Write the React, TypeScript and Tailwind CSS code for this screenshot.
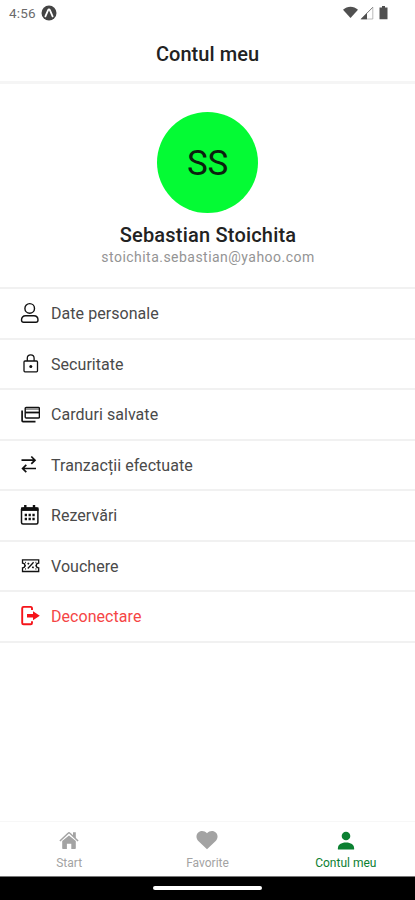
import React from 'react';

type IconProps = { className?: string };

const UserIcon: React.FC<IconProps> = ({ className }) => (
  <svg className={className} viewBox="0 0 20 22" fill="none" stroke="currentColor" strokeWidth="1.4">
    <circle cx="9.700" cy="6.400" r="4.800" />
    <path d="M5.600 13.700h8.200c2.800 0 4.200 1.900 4.200 4.300 0 1.500-.8 2.300-2.100 2.300H3.600c-1.300 0-2.100-.8-2.100-2.300 0-2.400 1.400-4.300 4.100-4.300z" />
  </svg>
);

const LockIcon: React.FC<IconProps> = ({ className }) => (
  <svg className={className} viewBox="0 0 20 22" fill="none" stroke="currentColor" strokeWidth="1.3">
    <rect x="4" y="8" width="13.500" height="10.800" rx="1" />
    <path d="M7.300 8V5.200a3.400 3.400 0 0 1 6.800 0V8" />
    <circle cx="10.800" cy="13.500" r="1.500" fill="currentColor" stroke="none" />
  </svg>
);

const CardsIcon: React.FC<IconProps> = ({ className }) => (
  <svg className={className} viewBox="0 0 20 22" fill="none" stroke="currentColor" strokeWidth="1.4">
    <rect x="5.200" y="4.500" width="14.200" height="10.500" rx="1" />
    <path d="M5.200 6.200h14.200" strokeOpacity=".5" />
    <path d="M5.200 9.500h14.200" strokeWidth="1.800" />
    <path d="M2.100 7.500v10.200c0 .6.300.9.900.9h12.500" strokeWidth="1.700" />
  </svg>
);

const TransferIcon: React.FC<IconProps> = ({ className }) => (
  <svg className={className} viewBox="0 0 20 22" fill="none" stroke="currentColor" strokeWidth="1.700">
    <path d="M1.500 6.200h13.300M11.300 2.500L15 6.200l-3.700 3.700M16 14.500H2.800M6.300 10.800l-3.700 3.700 3.700 3.700" />
  </svg>
);

const CalendarIcon: React.FC<IconProps> = ({ className }) => (
  <svg className={className} viewBox="0 0 20 22" fill="none" stroke="currentColor">
    <rect x="1.500" y="4" width="16.400" height="16" rx="1.500" strokeWidth="1.500" />
    <path d="M1 5.200h17.500" strokeWidth="3.500" />
    <path d="M5.300 1v5M14 1v5" strokeWidth="2.400" />
    <path d="M4.700 11h10M4.700 15h10" strokeWidth="2.300" strokeDasharray="2.300 1.550" />
  </svg>
);

const VoucherIcon: React.FC<IconProps> = ({ className }) => (
  <svg className={className} viewBox="0 0 20 22" fill="none" stroke="currentColor" strokeWidth="1.300">
    <path d="M2.500 4.800h16.200v3.300a2.400 2.400 0 0 0 0 4.800v3.600H2.500v-3.600a2.400 2.400 0 0 0 0-4.800z" />
    <path d="M7.800 13.500l5.800-6.200" />
    <path d="M7.600 8.200l1.500.8M12.200 12l1.500.8" strokeWidth="1.800" />
    <path d="M5.500 6.800v1.500M5.500 10v1.500M5.500 13.200v1.500M15.900 6.800v1.500M15.900 10v1.500M15.900 13.200v1.500" strokeWidth=".8" />
  </svg>
);

const LogoutIcon: React.FC<IconProps> = ({ className }) => (
  <svg className={className} viewBox="0 0 20 22" fill="none" stroke="currentColor">
    <path d="M12 5V3.300c0-.9-.4-1.400-1.300-1.400H3.600c-.9 0-1.400.5-1.400 1.400v14.600c0 .9.500 1.400 1.400 1.400h7.100c.9 0 1.300-.5 1.300-1.400v-1.700" strokeWidth="1.900" />
    <path d="M7 9h6V6.200l6.800 4.500-6.800 4.500v-2.800H7z" fill="currentColor" stroke="none" />
  </svg>
);

const HomeIcon: React.FC<IconProps> = ({ className }) => (
  <svg className={className} viewBox="0 0 20 20" fill="currentColor">
    <path d="M10 5.600l6.800 5.500v7c0 .7-.4 1-1 1h-3.500v-5.300H7.900v5.300H4.200c-.6 0-1-.3-1-1v-7z" />
    <path d="M.9 11L9.100 3.200c.5-.5 1.300-.5 1.800 0l8.200 7.800" fill="none" stroke="currentColor" strokeWidth="1.500" />
    <path d="M14 2.300h2.800v6.500L14 6.200z" />
  </svg>
);

const HeartIcon: React.FC<IconProps> = ({ className }) => (
  <svg className={className} viewBox="0 0 22 20" fill="currentColor">
    <path d="M11 19.200L2.300 11C-.1 8.600-.1 4.900 2 2.700 4.500.2 8.500.5 11 3.300 13.500.5 17.500.2 20 2.700c2.100 2.200 2.100 5.900-.3 8.300z" />
  </svg>
);

const PersonIcon: React.FC<IconProps> = ({ className }) => (
  <svg className={className} viewBox="0 0 18 20" fill="currentColor">
    <circle cx="9" cy="6" r="4.300" />
    <path d="M.9 19.500v-1.300C.9 14.800 4 12.500 9 12.500s8.100 2.300 8.100 5.700v1.300z" />
  </svg>
);

const menu = [
  { label: 'Date personale', icon: UserIcon },
  { label: 'Securitate', icon: LockIcon },
  { label: 'Carduri salvate', icon: CardsIcon },
  { label: 'Tranzacții efectuate', icon: TransferIcon },
  { label: 'Rezervări', icon: CalendarIcon },
  { label: 'Vouchere', icon: VoucherIcon },
  { label: 'Deconectare', icon: LogoutIcon, danger: true },
];

const StatusBar: React.FC = () => (
  <div className="flex h-[26px] items-center pl-[9px] pr-[27px] text-[#555]">
    <span className="text-[13.5px] tracking-[0.2px] text-[#6b6b6b]">4:56</span>
    <svg className="ml-[5px] h-4 w-4" viewBox="0 0 16 16">
      <circle cx="8" cy="8" r="7.500" fill="#444" />
      <path d="M4.400 11.300L7.100 5.100c.4-.8 1.400-.8 1.800 0l2.700 6.200" fill="none" stroke="#fff" strokeWidth="1.800" strokeLinecap="round" />
    </svg>
    <div className="ml-auto flex items-center">
      <svg className="h-[14px] w-[15px]" viewBox="0 0 15 14">
        <path d="M0 3.700C4.400-.2 10.600-.2 15 3.700L7.500 12z" fill="#505050" />
      </svg>
      <svg className="ml-0.5 h-[14px] w-[14px]" viewBox="0 0 14 14">
        <path d="M1.200 13L12.800 1.400V13z" fill="#fff" stroke="#aaa" strokeWidth=".8" />
        <path d="M.5 13.300L7 6.800v6.500z" fill="#505050" />
        <path d="M1 13L12.800 1.200" stroke="#777" strokeWidth=".8" />
      </svg>
      <svg className="ml-[5px] h-[14px] w-[9px]" viewBox="0 0 9 14">
        <path d="M3 0h3v1.500h2.500v11.700H.5V1.500H3z" fill="#505050" />
      </svg>
    </div>
  </div>
);

export default function App() {
  return (
    <div className="flex h-[900px] w-[415px] flex-col overflow-hidden bg-white font-['Roboto',sans-serif]">
      <StatusBar />
      <header className="flex h-[58px] items-center justify-center border-b-[3px] border-[#f5f5f5]">
        <h1 className="text-[20px] font-medium tracking-[0.05px] text-[#222]">Contul meu</h1>
      </header>

      <section className="flex h-[203px] flex-col items-center pt-[27.500px]">
        <div className="flex size-[101px] items-center justify-center rounded-full bg-[#04fb34] text-[35px] text-[#0b210e]">
          <span className="pt-[4px] tracking-[-0.4px]">SS</span>
        </div>
        <h2 className="mt-[8.500px] pl-px text-[20px] leading-7 font-medium tracking-[0.2px] text-[#222]">Sebastian Stoichita</h2>
        <p className="pl-px text-[14px] leading-4 tracking-[0.47px] text-[#949494]">stoichita.sebastian@yahoo.com</p>
      </section>

      <nav className="border-t-2 border-[#f1f1f1]">
        {menu.map(({ label, icon: Icon, danger }) => (
          <button
            key={label}
            className={`flex h-[50.5px] w-full items-center border-b-2 border-[#f1f1f1] pl-5 text-left ${danger ? 'text-[#f5141a]' : 'text-[#111]'}`}
          >
            <Icon className="h-[22px] w-5" />
            <span className={`ml-[11px] pt-[2px] text-[16px] tracking-[0.05px] ${danger ? 'text-[#f54545]' : 'text-[#4a4a4a]'}`}>{label}</span>
          </button>
        ))}
      </nav>

      <footer className="mt-auto">
        <div className="grid h-[55px] grid-cols-3 border-t border-[#f7f7f7] text-[12px] leading-4 text-[#a3a3a3]">
          <div className="flex flex-col items-center pt-2">
            <HomeIcon className="size-5" />
            <span className="mt-[5px]">Start</span>
          </div>
          <div className="flex flex-col items-center pt-2">
            <HeartIcon className="h-5 w-[22px]" />
            <span className="mt-[5px]">Favorite</span>
          </div>
          <div className="flex flex-col items-center pt-2 text-[#0b8031]">
            <PersonIcon className="h-5 w-[18px]" />
            <span className="mt-[5px]">Contul meu</span>
          </div>
        </div>
        <div className="flex h-6 justify-center border-t border-[#777] bg-black pt-[9px]">
          <div className="h-1 w-[109px] rounded-full bg-white" />
        </div>
      </footer>
    </div>
  );
}
